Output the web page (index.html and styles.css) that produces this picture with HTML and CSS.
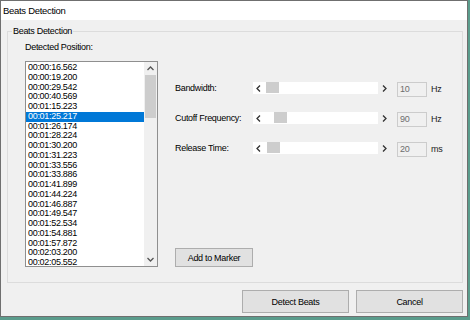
FILE: index.html
```
<!DOCTYPE html>
<html lang="en">
<head>
    <meta charset="UTF-8">
    <meta name="viewport" content="width=device-width, initial-scale=1.0">
    <title>Beats Detection</title>
    <link rel="stylesheet" href="styles.css">
</head>
<body>
    <div class="window">
        <div class="titlebar">Beats Detection</div>

        <div class="content">
            <fieldset class="group">
                <legend>Beats Detection</legend>
                <div class="group-body">
                    <div class="positions">
                        <div class="caption">Detected Position:</div>
                        <div class="listbox">
                            <ul class="items">
                                <li>00:00:16.562</li>
                                <li>00:00:19.200</li>
                                <li>00:00:29.542</li>
                                <li>00:00:40.569</li>
                                <li>00:01:15.223</li>
                                <li class="selected">00:01:25.217</li>
                                <li>00:01:26.174</li>
                                <li>00:01:28.224</li>
                                <li>00:01:30.200</li>
                                <li>00:01:31.223</li>
                                <li>00:01:33.556</li>
                                <li>00:01:33.886</li>
                                <li>00:01:41.899</li>
                                <li>00:01:44.224</li>
                                <li>00:01:46.887</li>
                                <li>00:01:49.547</li>
                                <li>00:01:52.534</li>
                                <li>00:01:54.881</li>
                                <li>00:01:57.872</li>
                                <li>00:02:03.200</li>
                                <li>00:02:05.552</li>
                            </ul>
                            <div class="vscroll">
                                <div class="vbtn">
                                    <svg width="7" height="5" viewBox="0 0 7 5"><polyline points="0.5,4 3.5,1 6.5,4" fill="none" stroke="#555" stroke-width="1.3"/></svg>
                                </div>
                                <div class="vtrack"><div class="vthumb"></div></div>
                                <div class="vbtn">
                                    <svg width="7" height="5" viewBox="0 0 7 5"><polyline points="0.5,1 3.5,4 6.5,1" fill="none" stroke="#555" stroke-width="1.3"/></svg>
                                </div>
                            </div>
                        </div>
                    </div>

                    <div class="settings">
                        <div class="row">
                            <span class="label">Bandwidth:</span>
                            <div class="hscroll">
                                <div class="hbtn">
                                    <svg width="5" height="7" viewBox="0 0 5 7"><polyline points="4,0.5 1,3.5 4,6.5" fill="none" stroke="#333" stroke-width="1.3"/></svg>
                                </div>
                                <div class="htrack"><div class="hthumb" style="margin-left: 3px"></div></div>
                                <div class="hbtn right">
                                    <svg width="5" height="7" viewBox="0 0 5 7"><polyline points="1,0.5 4,3.5 1,6.5" fill="none" stroke="#333" stroke-width="1.3"/></svg>
                                </div>
                            </div>
                            <div class="edit">10</div>
                            <span class="unit">Hz</span>
                        </div>

                        <div class="row">
                            <span class="label">Cutoff Frequency:</span>
                            <div class="hscroll">
                                <div class="hbtn">
                                    <svg width="5" height="7" viewBox="0 0 5 7"><polyline points="4,0.5 1,3.5 4,6.5" fill="none" stroke="#333" stroke-width="1.3"/></svg>
                                </div>
                                <div class="htrack"><div class="hthumb" style="margin-left: 11px"></div></div>
                                <div class="hbtn right">
                                    <svg width="5" height="7" viewBox="0 0 5 7"><polyline points="1,0.5 4,3.5 1,6.5" fill="none" stroke="#333" stroke-width="1.3"/></svg>
                                </div>
                            </div>
                            <div class="edit">90</div>
                            <span class="unit">Hz</span>
                        </div>

                        <div class="row">
                            <span class="label">Release Time:</span>
                            <div class="hscroll">
                                <div class="hbtn">
                                    <svg width="5" height="7" viewBox="0 0 5 7"><polyline points="4,0.5 1,3.5 4,6.5" fill="none" stroke="#333" stroke-width="1.3"/></svg>
                                </div>
                                <div class="htrack"><div class="hthumb" style="margin-left: 4px"></div></div>
                                <div class="hbtn right">
                                    <svg width="5" height="7" viewBox="0 0 5 7"><polyline points="1,0.5 4,3.5 1,6.5" fill="none" stroke="#333" stroke-width="1.3"/></svg>
                                </div>
                            </div>
                            <div class="edit">20</div>
                            <span class="unit">ms</span>
                        </div>

                        <button class="btn add-marker">Add to Marker</button>
                    </div>
                </div>
            </fieldset>

            <div class="footer">
                <button class="btn dialog-btn">Detect Beats</button>
                <button class="btn dialog-btn">Cancel</button>
            </div>
        </div>
    </div>
</body>
</html>
```

FILE: styles.css
```
body {
    margin: 0;
    background-color: #5b9c8c;
    font-family: "Liberation Sans", Arial, sans-serif;
    font-size: 9px;
    letter-spacing: -0.3px;
    color: #000;
}

.window {
    width: 468px;
    height: 317px;
    box-sizing: border-box;
    border: 1px solid #6f6f6f;
    background-color: #f0f0f0;
}

.titlebar {
    height: 19px;
    line-height: 19px;
    padding-left: 2px;
    background-color: #fff;
    font-size: 9.5px;
}

.content {
    padding: 6px 4px 0 6px;
}

.group {
    margin: 0;
    padding: 0;
    border: 1px solid #dcdcdc;
}

.group legend {
    margin-left: 4px;
    padding: 0 1px;
    line-height: 11px;
}

.group-body {
    display: flex;
    gap: 17px;
    padding: 5px 0 15px 17px;
}

.positions {
    width: 133px;
}

.caption {
    line-height: 10px;
    margin-bottom: 9px;
}

.listbox {
    display: flex;
    height: 206px;
    box-sizing: border-box;
    border: 1px solid #8f8f8f;
    background-color: #fff;
}

.items {
    flex: 1;
    list-style: none;
    margin: 0;
    padding: 1px 0 0;
    overflow: hidden;
}

.items li {
    height: 9.75px;
    line-height: 9.75px;
    padding-left: 2px;
}

.items li.selected {
    background-color: #0078d7;
    color: #fff;
}

.vscroll {
    width: 13px;
    display: flex;
    flex-direction: column;
    background-color: #f0f0f0;
}

.vbtn {
    height: 13px;
    display: flex;
    align-items: center;
    justify-content: center;
}

.vtrack {
    flex: 1;
    padding: 0 1px;
}

.vthumb {
    height: 43px;
    background-color: #cdcdcd;
}

.settings {
    display: flex;
    flex-direction: column;
    gap: 15px;
    padding-top: 40px;
}

.row {
    display: flex;
    align-items: flex-start;
    height: 15px;
}

.label {
    width: 78px;
    line-height: 12px;
}

.hscroll {
    display: flex;
    width: 138px;
    height: 12px;
    background-color: #fff;
}

.hbtn {
    width: 10px;
    display: flex;
    align-items: center;
    justify-content: center;
}

.hbtn.right {
    width: 13px;
    background-color: #f0f0f0;
}

.htrack {
    flex: 1;
}

.hthumb {
    width: 13px;
    height: 11px;
    background-color: #cdcdcd;
}

.edit {
    width: 30px;
    height: 15px;
    box-sizing: border-box;
    margin-left: 6px;
    padding-left: 2px;
    border: 1px solid #cccccc;
    background-color: #f0f0f0;
    color: #6d6d6d;
    line-height: 13px;
}

.unit {
    margin-left: 4px;
    line-height: 15px;
    color: #222;
}

.btn {
    padding: 0;
    border: 1px solid #adadad;
    background-color: #e1e1e1;
    font: inherit;
    letter-spacing: inherit;
    color: #000;
}

.add-marker {
    width: 78px;
    height: 19px;
    margin-top: auto;
}

.footer {
    display: flex;
    justify-content: flex-end;
    gap: 7px;
    margin-top: 7px;
}

.dialog-btn {
    width: 107px;
    height: 23px;
}
```
